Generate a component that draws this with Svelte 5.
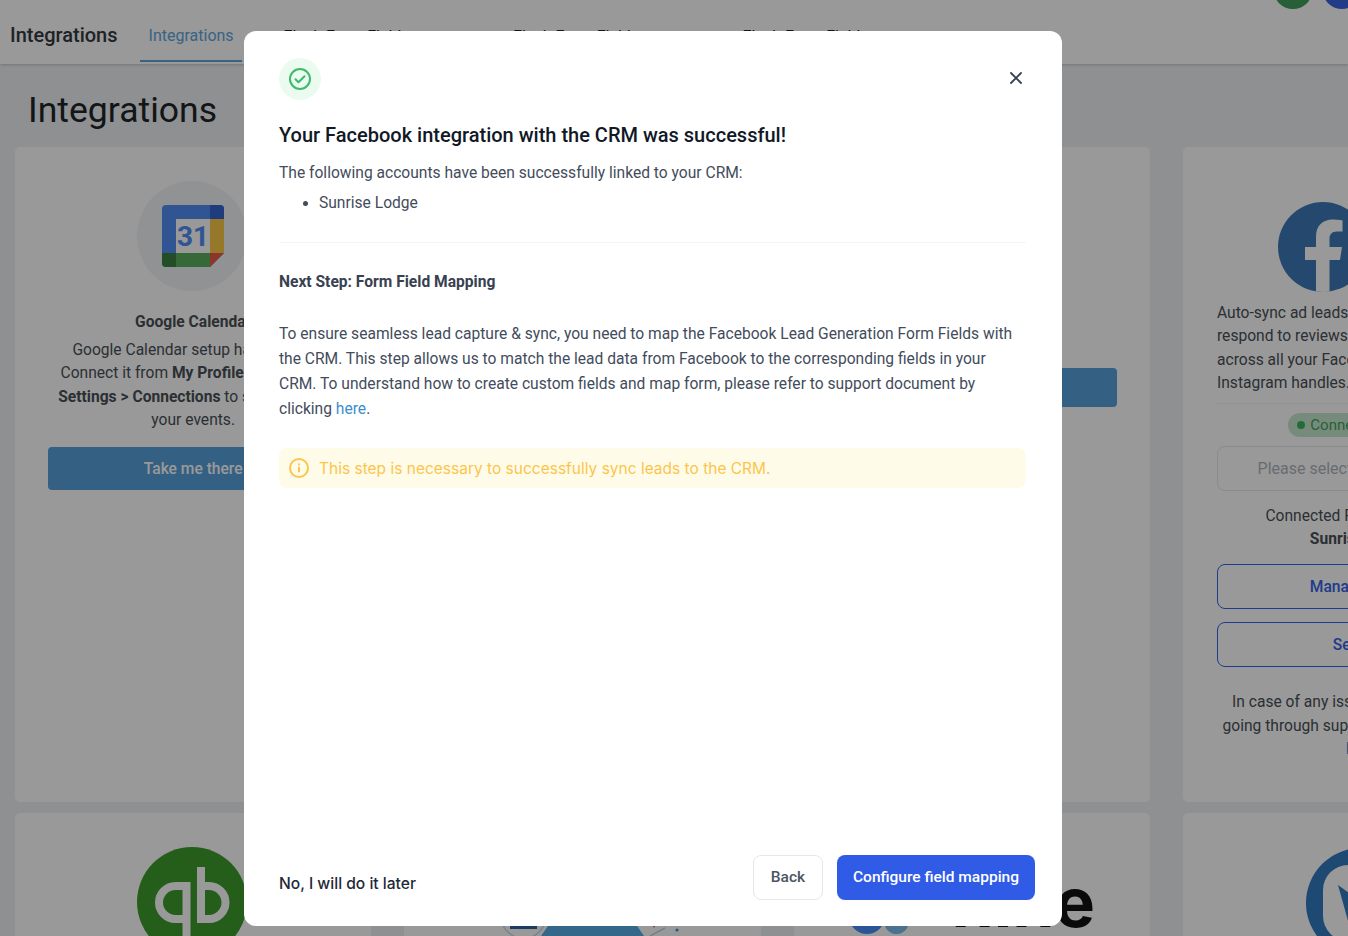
<script>
  const tabs = ['Flash Form Fields', 'Flash Form Fields', 'Flash Form Fields'];
</script>

<div class="page">
  <header class="topbar">
    <div class="brand">Integrations</div>
    <nav class="tabs">
      <span class="tab active">Integrations</span>
      {#each tabs as t}<span class="tab">{t}</span>{/each}
    </nav>
    <div class="avatars"><span class="av green"></span><span class="av blue"></span></div>
  </header>

  <main class="content">
    <h1>Integrations</h1>
    <div class="grid">
      <section class="card">
        <div class="logo gray">
          <svg width="62" height="62" viewBox="0 0 62 62">
            <path d="M4 0H58A4 4 0 0 1 62 4V48L48 62H4A4 4 0 0 1 0 58V4A4 4 0 0 1 4 0Z" fill="#538ef5"/>
            <path d="M48 0H58A4 4 0 0 1 62 4V14H48Z" fill="#3566d0"/>
            <rect x="48" y="14" width="14" height="34" fill="#f8c845"/>
            <path d="M14 48H48V62H14Z" fill="#5cae5c"/>
            <path d="M0 48H14V62H4A4 4 0 0 1 0 58Z" fill="#3a8040"/>
            <path d="M48 48H62L48 62Z" fill="#ea5a45"/>
            <rect x="14" y="14" width="34" height="34" fill="#fff"/>
            <text x="31" y="41" text-anchor="middle" class="cal">31</text>
          </svg>
        </div>
        <h3>Google Calendar</h3>
        <p class="center">Google Calendar setup has moved.<br>Connect it from <b>My Profile &gt; Accounts</b><br><b>Settings &gt; Connections</b> to sync all your<br>your events.</p>
        <button class="solid">Take me there</button>
      </section>

      <section class="card"></section>

      <section class="card">
        <div class="spacer-three"></div>
        <button class="solid slim">Take me there</button>
      </section>

      <section class="card fbcard">
        <div class="logo fb">
          <svg width="90" height="90" viewBox="0 0 90 90">
            <circle cx="45" cy="45" r="45" fill="#3e78b9"/>
            <path d="M62 58 64 45H51.500V36.500C51.500 33 53.300 29.500 59 29.500H64.500V18.500S59.500 17.600 54.700 17.600C44.700 17.600 38 23.700 38 34.700V45H27V58H38V89.500C40.300 89.800 42.600 90 45 90S49.200 89.800 51.500 89.500V58Z" fill="#fff"/>
          </svg>
        </div>
        <p class="left">Auto-sync ad leads, post content,<br>respond to reviews and messages<br>across all your Facebook and<br>Instagram handles.</p>
        <hr class="rule" />
        <div class="badge-row"><span class="badge"><i></i>Connected Page</span></div>
        <div class="select">Please select Facebook Page</div>
        <p class="connected">Connected Facebook Page:<br><b>Sunrise Lodge</b></p>
        <button class="outline first">Manage Pages</button>
        <button class="outline">Settings</button>
        <p class="help">In case of any issues, we recommend<br>going through support document or visit<br><a href="#top">Help</a></p>
      </section>

      <section class="card low">
        <div class="logo qb">
          <svg width="110" height="110" viewBox="0 0 110 110">
            <circle cx="55" cy="55" r="55" fill="#3f9c2c"/>
            <g fill="none" stroke="#fff" stroke-width="8">
              <path d="M49.500 72H38.500A16.500 16.500 0 0 1 38.500 39H49.500V100"/>
              <path d="M64 39H72A16.500 16.500 0 0 1 72 72H64V20"/>
            </g>
          </svg>
        </div>
      </section>

      <section class="card low">
        <div class="wide-logo second">
          <svg width="190" height="16" viewBox="0 0 190 16">
            <circle cx="26.500" cy="-4" r="22.400" fill="none" stroke="#c8dcf0" stroke-width="1.500"/>
            <rect x="13" y="6" width="27" height="3" fill="#32649f"/>
            <path d="M55 0H136L147 16H44Z" fill="#55aee8"/>
            <path d="M168 8 153 16" stroke="#c3d6e6" stroke-width="1.500"/>
            <circle cx="180" cy="10" r="1.600" fill="#4a90d9"/>
            <circle cx="157" cy="6.500" r="1" fill="#e06a6a"/>
          </svg>
        </div>
      </section>

      <section class="card low">
        <div class="wide-logo third">
          <svg width="60" height="42" viewBox="0 0 60 42" class="mark">
            <circle cx="16" cy="22" r="18" fill="#4b8efa"/>
            <circle cx="45.500" cy="27.700" r="12.300" fill="#7dc0f0"/>
          </svg>
          <span class="word">nine</span>
        </div>
      </section>

      <section class="card low fbcard">
        <div class="logo clock">
          <svg width="110" height="110" viewBox="0 0 110 110">
            <path fill-rule="evenodd" d="M55 0A55 55 0 1 1 55 110A55 55 0 1 1 55 0ZM42 17A25 25 0 0 0 17 42V68A25 25 0 0 0 42 93H68A25 25 0 0 0 93 68V42A25 25 0 0 0 68 17Z" fill="#327abf"/>
            <path d="M32 37 60 57 44 80Z" fill="#327abf"/>
          </svg>
        </div>
      </section>
    </div>
  </main>
</div>

<div class="overlay">
  <div class="modal" role="dialog">
    <div class="modal-top">
      <span class="check">
        <svg width="24" height="24" viewBox="0 0 24 24" fill="none" stroke="#3fb96b" stroke-width="2" stroke-linecap="round" stroke-linejoin="round">
          <circle cx="12" cy="12" r="10"/>
          <path d="m7.500 12.300 3 3 6-6"/>
        </svg>
      </span>
      <button class="close" aria-label="Close">
        <svg width="14" height="14" viewBox="0 0 14 14" fill="none" stroke="#374151" stroke-width="1.800" stroke-linecap="round">
          <path d="M2 2l10 10M12 2 2 12"/>
        </svg>
      </button>
    </div>
    <h2>Your Facebook integration with the CRM was successful!</h2>
    <p class="intro">The following accounts have been successfully linked to your CRM:</p>
    <ul><li>Sunrise Lodge</li></ul>
    <hr class="divider" />
    <h4>Next Step: Form Field Mapping</h4>
    <p class="body">To ensure seamless lead capture &amp; sync, you need to map the Facebook Lead Generation Form Fields with the CRM. This step allows us to match the lead data from Facebook to the corresponding fields in your CRM. To understand how to create custom fields and map form, please refer to support document by clicking <a href="#top">here</a>.</p>
    <div class="alert">
      <svg width="22" height="22" viewBox="0 0 22 22" fill="none" stroke="#fcc44d" stroke-width="2" stroke-linecap="round">
        <circle cx="11" cy="11" r="9"/>
        <path d="M11 10.500v4M11 7.300v.2"/>
      </svg>
      <span>This step is necessary to successfully sync leads to the CRM.</span>
    </div>
    <div class="footer">
      <span class="later">No, I will do it later</span>
      <div class="actions">
        <button class="back">Back</button>
        <button class="primary">Configure field mapping</button>
      </div>
    </div>
  </div>
</div>

<style>
  :global(body) { margin: 0; overflow: hidden; font-family: Roboto, "Liberation Sans", sans-serif; background: #eef1f4; }
  .page { width: 1348px; height: 936px; overflow: hidden; background: #eef1f4; color: #212529; }
  .topbar { height: 64px; background: #fff; display: flex; align-items: flex-end; box-shadow: 0 1px 3px rgba(0,0,0,.2); position: relative; padding-left: 10px; box-sizing: border-box; }
  .brand { font-size: 20px; font-weight: 500; color: #343a40; align-self: flex-start; margin-top: 21px; line-height: 28px; }
  .tabs { display: flex; margin-left: 22px; height: 64px; align-items: flex-end; }
  .tab { font-size: 16px; font-weight: 400; line-height: 20px; padding: 27px 9px 12px; color: #212529; width: 229.500px; box-sizing: border-box; white-space: nowrap; height: 64px; }
  .tab.active { color: #5fa5dc; width: 102px; border-bottom: 2px solid #5fa5dc; margin-right: 33px; height: 62px; padding-top: 26px; margin-bottom: 2px; }
  .avatars { position: absolute; left: 1274px; top: -27px; display: flex; gap: 11px; }
  .av { width: 38px; height: 36px; border-radius: 50%; display: block; }
  .green { background: #429e5b; }
  .blue { background: #3a64e3; }
  .content { padding: 0 0 0 15px; }
  h1 { font-size: 35.600px; font-weight: 400; margin: 0; padding: 25px 0 16px 13px; line-height: 42px; color: #212529; }
  .grid { display: grid; grid-template-columns: repeat(4, 356.33px); grid-template-rows: 655px 200px; column-gap: 33px; row-gap: 11px; }
  .card { background: #fff; border-radius: 5px; padding: 33px 33px 0; box-sizing: border-box; font-size: 15.600px; color: #495057; display: flex; flex-direction: column; min-width: 0; }
  .fbcard { padding-left: 34px; }
  .low { overflow: hidden; }
  .logo { display: flex; justify-content: center; align-items: center; height: 110px; flex: none; }
  .logo.gray { width: 110px; height: 110px; box-sizing: border-box; padding-left: 2px; border-radius: 50%; background: #f1f3f5; align-self: center; margin: 1px 2px 0 0; }
  .cal { font-family: Roboto, sans-serif; font-size: 28px; font-weight: 700; fill: #538ef5; }
  .logo.fb { justify-content: flex-start; margin: 22px 0 0 61px; height: 90px; }
  .logo.qb { margin: 1px 2px 0 0; }
  .logo.clock { margin: 2px 2px 0 0; }
  h3 { font-size: 15.600px; font-weight: 700; text-align: center; margin: 19px 0 5px; line-height: 24px; color: #495057; white-space: nowrap; }
  p { margin: 0; line-height: 23.400px; }
  .center { text-align: center; white-space: nowrap; margin: 0 -30px; }
  .solid { margin-top: 14px; height: 43px; border: 0; border-radius: 4px; background: #57a0dd; color: #fff; font: 500 15.600px Roboto, sans-serif; flex: none; padding: 2px 0 0; }
  .solid.slim { height: 39px; margin-top: 15px; }
  .spacer-three { height: 173px; flex: none; }
  .left { margin-top: 10px; white-space: nowrap; }
  .rule { border: 0; border-top: 1px solid #f1f3f5; margin: 7px 0 0; width: 100%; }
  .badge-row { display: flex; justify-content: center; margin-top: 9px; }
  .badge { display: inline-flex; align-items: center; gap: 5px; padding: 0 15px 0 9px; height: 24px; border-radius: 12px; background: #c6e8cf; color: #3fa35c; font-size: 15px; white-space: nowrap; }
  .badge i { width: 8px; height: 8px; border-radius: 50%; background: #3fb25f; }
  .select { margin-top: 9px; height: 45px; border: 1px solid #e5e7eb; border-radius: 8px; display: flex; align-items: center; justify-content: center; color: #adb5bd; font-size: 16px; white-space: nowrap; box-sizing: border-box; flex: none; }
  .connected { text-align: center; margin: 14px 3px 0 0; white-space: nowrap; }
  .outline { height: 45px; border: 1px solid #3563e9; border-radius: 8px; background: #fff; color: #3563e9; font: 500 15.600px Roboto, sans-serif; margin-top: 13px; flex: none; }
  .help { text-align: center; margin: 24px -20px 0; white-space: nowrap; }
  .help a { color: #3b8ed0; text-decoration: none; }
  .wide-logo { display: flex; flex: none; }
  .wide-logo.second { margin: 74px 0 0 60px; }
  .wide-logo.third { margin: 26px 22px 0 24px; align-items: flex-start; justify-content: space-between; }
  .mark { margin-top: 22px; flex: none; }
  .word { font: 700 68px Inter, Roboto, sans-serif; color: #111; line-height: 60px; white-space: nowrap; }

  .overlay { position: fixed; inset: 0; background: rgba(0,0,0,.4); display: flex; justify-content: flex-start; }
  .modal { margin: 31px 0 10px 244px; width: 818px; background: #fff; border-radius: 12px; padding: 27px 27px 26px 35px; box-sizing: border-box; display: flex; flex-direction: column; color: #434c5c; }
  .modal-top { display: flex; justify-content: space-between; align-items: flex-start; padding-right: 12px; }
  .check { width: 42px; height: 42px; border-radius: 50%; background: #ebfbef; display: flex; align-items: center; justify-content: center; }
  .close { background: none; border: 0; padding: 0; margin-top: 13px; width: 14px; height: 14px; display: flex; }
  h2 { font-size: 20px; font-weight: 500; line-height: 28px; color: #111827; margin: 21px 0 0; }
  .intro { font-size: 15.600px; line-height: 24px; margin-top: 12px; }
  ul { margin: 6px 0 0; padding-left: 40px; font-size: 15.600px; line-height: 24px; }
  .divider { border: 0; border-top: 1px solid #f3f4f6; margin: 27px 9px 0 0; width: calc(100% - 9px); }
  h4 { font-size: 15.600px; font-weight: 700; line-height: 24px; margin: 27px 0 0; color: #374151; }
  .body { font-size: 15.600px; line-height: 25px; margin: 28px 9px 0 0; }
  .body a { color: #3b8ed0; text-decoration: none; }
  .alert { margin: 26px 9px 0 0; height: 40px; background: #fefce8; border-radius: 8px; display: flex; align-items: center; gap: 9px; padding-left: 9px; color: #fcc44d; font: 400 15.500px Inter, Roboto, sans-serif; flex: none; }
  .footer { margin-top: auto; display: flex; justify-content: space-between; align-items: flex-end; }
  .later { font: 500 15.600px/24px Inter, Roboto, sans-serif; color: #1f2937; padding-bottom: 4px; }
  .actions { display: flex; gap: 14px; align-items: center; }
  .back { width: 70px; height: 45px; background: #fff; border: 1px solid #e5e7eb; border-radius: 8px; color: #4b5563; font: 500 15.500px Roboto, sans-serif; padding: 0 0 2px; }
  .primary { width: 198px; height: 45px; background: #2f5be7; border: 0; border-radius: 8px; color: #fff; font: 500 15.500px Roboto, sans-serif; padding: 0 0 2px; }
</style>
